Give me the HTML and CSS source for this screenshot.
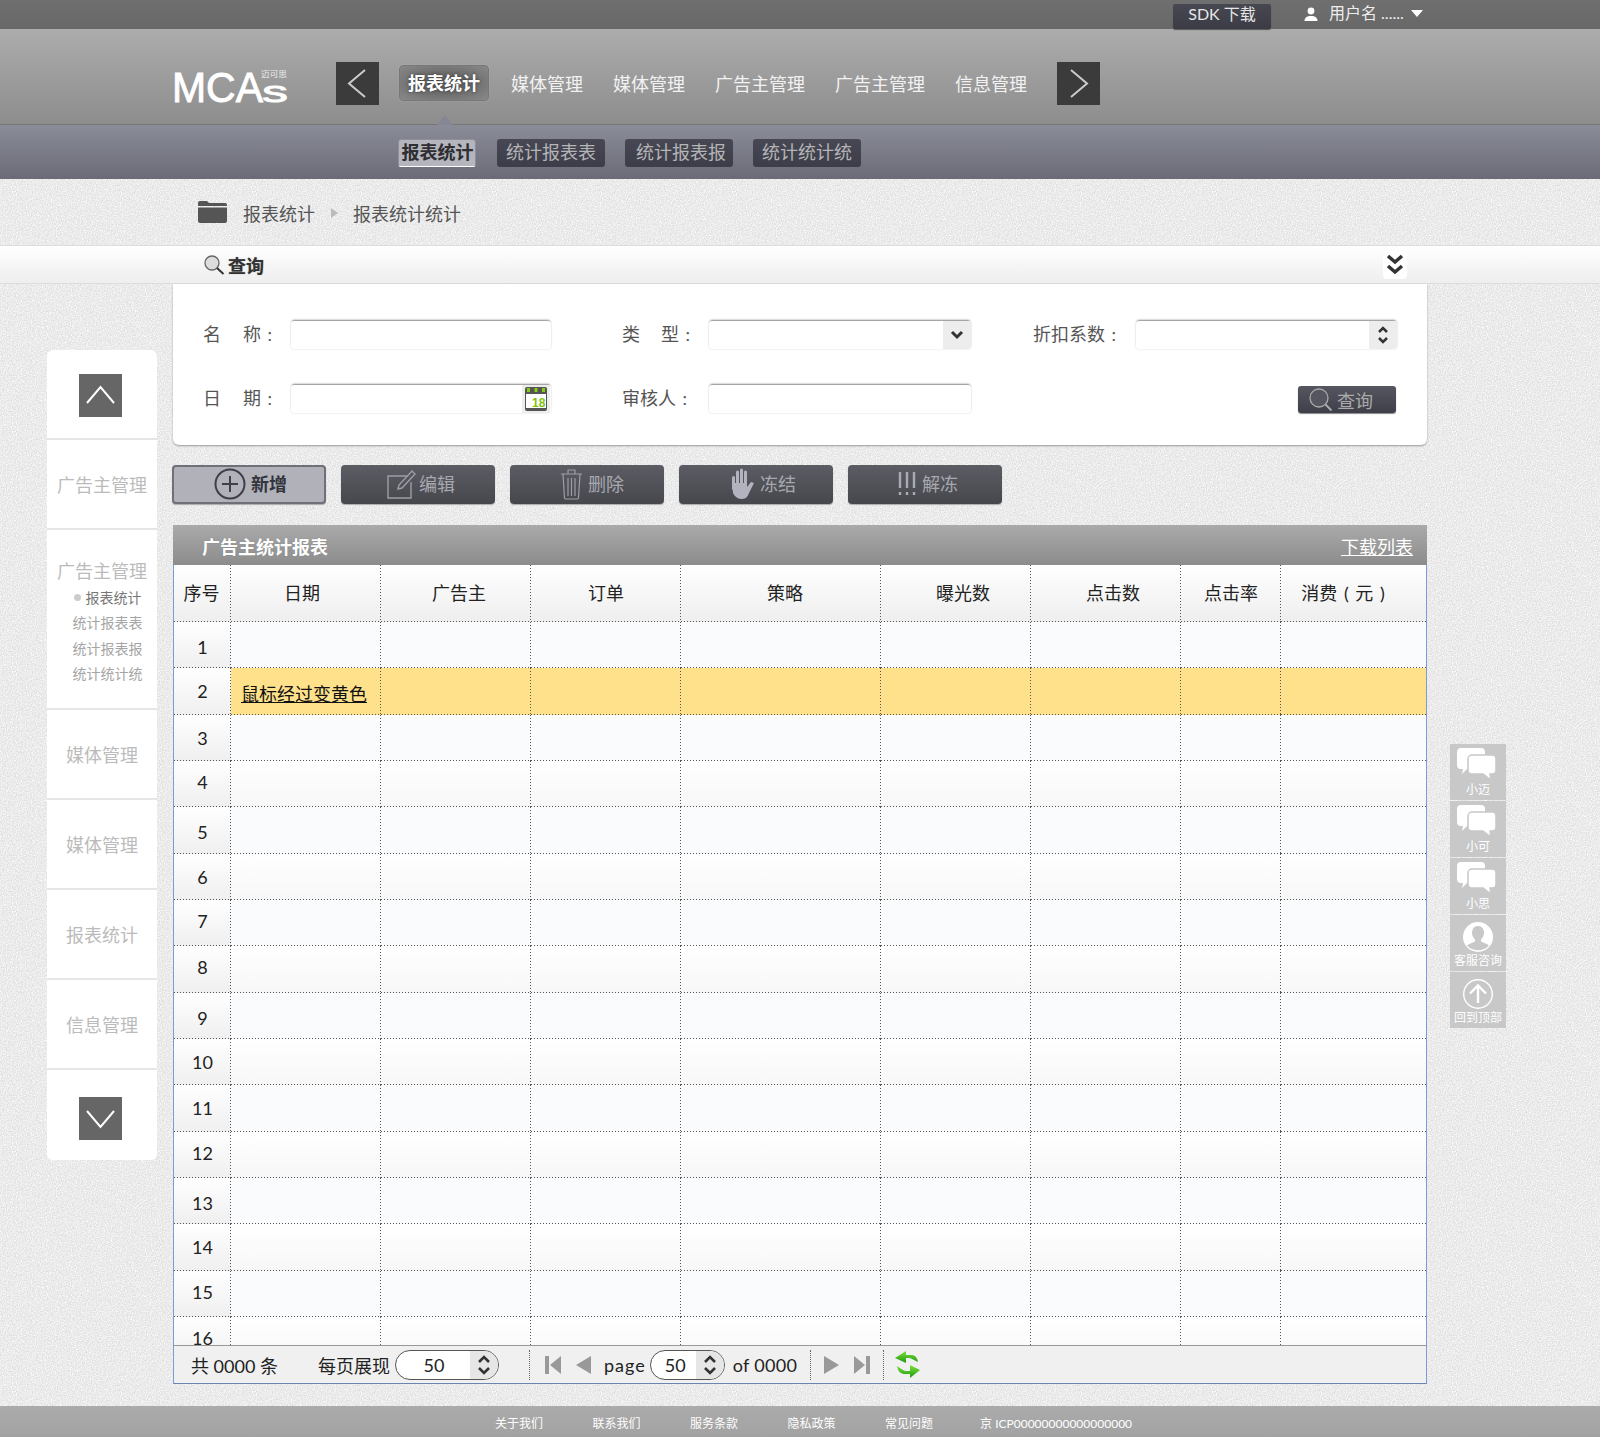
FILE: index.html
```html
<!DOCTYPE html>
<html lang="zh-CN">
<head>
<meta charset="utf-8">
<title>MCAs</title>
<link rel="stylesheet" href="styles.css">
</head>
<body>
<div class="page">
  <div class="topbar">
    <a class="sdk">SDK 下载</a>
    <svg class="user-ic" viewBox="0 0 14 14"><circle cx="7" cy="4" r="3.4"/><path d="M0.5 14c0-3.5 3-4.6 4.5-5h4c1.5.4 4.500 1.500 4.500 5z"/></svg>
    <span class="user">用户名 ......</span>
    <span class="caret"></span>
  </div>

  <header class="header">
    <svg class="logo" viewBox="0 0 116 34" width="116" height="34">
      <text class="logo-main" x="0" y="33" textLength="91" lengthAdjust="spacingAndGlyphs">MCA</text>
      <text class="logo-s" x="90" y="33" textLength="26" lengthAdjust="spacingAndGlyphs">s</text>
      <text class="logo-cn" x="89" y="8" textLength="26" lengthAdjust="spacingAndGlyphs">迈可思</text>
    </svg>
    <a class="arrow-btn prev"><svg viewBox="0 0 43 43"><polyline points="29,8 13,21.500 29,35"/></svg></a>
    <nav class="nav">
      <a class="nav-item active">报表统计</a>
      <a class="nav-item">媒体管理</a>
      <a class="nav-item">媒体管理</a>
      <a class="nav-item">广告主管理</a>
      <a class="nav-item">广告主管理</a>
      <a class="nav-item">信息管理</a>
    </nav>
    <a class="arrow-btn next"><svg viewBox="0 0 43 43"><polyline points="14,8 30,21.500 14,35"/></svg></a>
  </header>

  <div class="subnav">
    <span class="notch"></span>
    <a class="tab on">报表统计</a>
    <a class="tab">统计报表表</a>
    <a class="tab">统计报表报</a>
    <a class="tab">统计统计统</a>
  </div>

  <div class="crumbs">
    <svg class="folder" viewBox="0 0 29 23"><path d="M0 3a2 2 0 0 1 2-2h7l2 2h16a2 2 0 0 1 2 2v1H0z"/><path d="M0 7.500h29V21a2 2 0 0 1-2 2H2a2 2 0 0 1-2-2z"/></svg>
    <span>报表统计</span>
    <span class="crumb-arrow"></span>
    <span>报表统计统计</span>
  </div>

  <div class="querybar">
    <svg class="q-ic" viewBox="0 0 21 20"><circle cx="8" cy="8" r="7" fill="#ddd" stroke="#666" stroke-width="1.300"/><path d="M13 13l6.500 6" stroke="#333" stroke-width="2"/></svg>
    <strong>查询</strong>
    <a class="collapse"><svg viewBox="0 0 24 28"><path d="M5 5l7 6 7-6M5 15l7 6 7-6" fill="none" stroke="#333" stroke-width="3.500"/></svg></a>
  </div>

  <main class="main">
    <aside class="side">
      <div class="side-cell side-first"><a class="side-btn"><svg viewBox="0 0 43 43"><polyline points="8,29 21.500,13 35,29"/></svg></a></div>
      <div class="side-cell">广告主管理</div>
      <div class="side-group">
        <div class="side-title">广告主管理</div>
        <ul class="side-sub">
          <li class="cur"><i></i>报表统计</li>
          <li>统计报表表</li>
          <li>统计报表报</li>
          <li>统计统计统</li>
        </ul>
      </div>
      <div class="side-cell">媒体管理</div>
      <div class="side-cell">媒体管理</div>
      <div class="side-cell">报表统计</div>
      <div class="side-cell">信息管理</div>
      <div class="side-cell side-last"><a class="side-btn"><svg viewBox="0 0 43 43"><polyline points="8,14 21.500,30 35,14"/></svg></a></div>
    </aside>

    <section class="content">
      <form class="form">
        <label class="lbl wide"><span>名</span><span>称 :</span></label>
        <div class="inp"></div>
        <label class="lbl wide wide2 col2"><span>类</span><span>型 :</span></label>
        <div class="inp"><span class="side-box"><svg viewBox="0 0 28 28"><path d="M9 11l5 5 5-5" fill="none" stroke="#333" stroke-width="3"/></svg></span></div>
        <label class="lbl col3">折扣系数 :</label>
        <div class="inp"><span class="side-box"><svg viewBox="0 0 28 28"><path d="M10 11l4-4 4 4M10 17l4 4 4-4" fill="none" stroke="#333" stroke-width="2.500"/></svg></span></div>

        <label class="lbl wide"><span>日</span><span>期 :</span></label>
        <div class="inp"><span class="cal"><svg viewBox="0 0 24 26"><rect x="1" y="1" width="22" height="24" rx="2" fill="#555"/><rect x="3" y="2" width="3" height="4" fill="#8c1"/><rect x="10.500" y="2" width="3" height="4" fill="#8c1"/><rect x="18" y="2" width="3" height="4" fill="#8c1"/><rect x="2" y="8" width="20" height="14" fill="#fff"/><text class="cal-num" x="8" y="21">18</text></svg></span></div>
        <label class="lbl col2b">审核人 :</label>
        <div class="inp"></div>
        <span class="blank"></span>
        <a class="q-btn">
          <svg viewBox="0 0 26 24"><circle cx="11" cy="10" r="9" fill="#55565f" stroke="#aaa" stroke-width="1.300"/><path d="M17.500 16.500l6 6" stroke="#aaa" stroke-width="2"/></svg>
          <span>查询</span>
        </a>
      </form>

      <div class="tools">
        <a class="tool t-add">
          <svg width="32" height="32" viewBox="0 0 32 32"><circle cx="16" cy="16" r="14.500" fill="none" stroke="#3e3f48" stroke-width="2"/><path d="M16 8v16M8 16h16" stroke="#3e3f48" stroke-width="2"/></svg>
          <span>新增</span>
        </a>
        <a class="tool t-edit">
          <svg width="31" height="30" viewBox="0 0 31 30"><path d="M20 7H1v22h23V13" fill="none" stroke="#9c9da5" stroke-width="1.400"/><path d="M11 20l1-4L25 2l3 3-13 14z" fill="none" stroke="#9c9da5" stroke-width="1.400"/></svg>
          <span>编辑</span>
        </a>
        <a class="tool t-del">
          <svg width="23" height="32" viewBox="0 0 23 32"><path d="M1 6h21M8 6V2h7v4M3 6l1.500 24a1.500 1.500 0 0 0 1.500 1h11a1.500 1.500 0 0 0 1.500-1L20 6M8 10v18M11.500 10v18M15 10v18" fill="none" stroke="#9c9da5" stroke-width="1.200"/></svg>
          <span>删除</span>
        </a>
        <a class="tool t-frz">
          <svg width="24" height="31" viewBox="0 0 24 31"><path d="M2.500 9.500v11M6.500 4v13M10.500 2v15M14.500 4v13" stroke="#b3b3c0" stroke-width="3" stroke-linecap="round"/><path d="M1 15h15v4l4-5 3 1-5 10c-1 3-3 6-7 6s-7-2-9-6z" fill="#b3b3c0"/></svg>
          <span>冻结</span>
        </a>
        <a class="tool t-unf">
          <svg width="18" height="24" viewBox="0 0 18 24"><path d="M2 0v16M9 0v16M16 0v16M2 20v3M9 20v3M16 20v3" stroke="#aaaab5" stroke-width="2.400"/></svg>
          <span>解冻</span>
        </a>
      </div>

      <div class="t-head">
        <strong>广告主统计报表</strong>
        <a class="down">下载列表</a>
      </div>
      <div class="t-wrap">
        <table class="grid">
          <colgroup><col class="c1"><col class="c2"><col class="c2"><col class="c2"><col class="c3"><col class="c2"><col class="c2"><col class="c4"><col class="c5"></colgroup>
          <thead>
            <tr><th>序号</th><th>日期</th><th>广告主</th><th>订单</th><th>策略</th><th>曝光数</th><th>点击数</th><th>点击率</th><th>消费 ( 元 )</th></tr>
          </thead>
          <tbody>
            <tr><td>1</td><td></td><td></td><td></td><td></td><td></td><td></td><td></td><td></td></tr>
            <tr class="hover"><td>2</td><td class="lnk"><a>鼠标经过变黄色</a></td><td></td><td></td><td></td><td></td><td></td><td></td><td></td></tr>
            <tr><td>3</td><td></td><td></td><td></td><td></td><td></td><td></td><td></td><td></td></tr>
            <tr><td>4</td><td></td><td></td><td></td><td></td><td></td><td></td><td></td><td></td></tr>
            <tr><td>5</td><td></td><td></td><td></td><td></td><td></td><td></td><td></td><td></td></tr>
            <tr><td>6</td><td></td><td></td><td></td><td></td><td></td><td></td><td></td><td></td></tr>
            <tr><td>7</td><td></td><td></td><td></td><td></td><td></td><td></td><td></td><td></td></tr>
            <tr><td>8</td><td></td><td></td><td></td><td></td><td></td><td></td><td></td><td></td></tr>
            <tr><td>9</td><td></td><td></td><td></td><td></td><td></td><td></td><td></td><td></td></tr>
            <tr><td>10</td><td></td><td></td><td></td><td></td><td></td><td></td><td></td><td></td></tr>
            <tr><td>11</td><td></td><td></td><td></td><td></td><td></td><td></td><td></td><td></td></tr>
            <tr><td>12</td><td></td><td></td><td></td><td></td><td></td><td></td><td></td><td></td></tr>
            <tr><td>13</td><td></td><td></td><td></td><td></td><td></td><td></td><td></td><td></td></tr>
            <tr><td>14</td><td></td><td></td><td></td><td></td><td></td><td></td><td></td><td></td></tr>
            <tr><td>15</td><td></td><td></td><td></td><td></td><td></td><td></td><td></td><td></td></tr>
            <tr class="tail"><td>16</td><td></td><td></td><td></td><td></td><td></td><td></td><td></td><td></td></tr>
          </tbody>
        </table>
      </div>
      <div class="pager">
        <span class="p-total">共 0000 条</span>
        <span class="p-size">每页展现</span>
        <span class="pill p-wide"><b>50</b><i class="spin"><svg viewBox="0 0 28 28"><path d="M9 11l5-5 5 5M9 17l5 5 5-5" fill="none" stroke="#333" stroke-width="2.600"/></svg></i></span>
        <span class="sep s1"></span>
        <svg class="pg-ic i-first" viewBox="0 0 16 18"><rect x="0" y="0" width="4" height="18"/><path d="M16 0v18L5 9z"/></svg>
        <svg class="pg-ic i-prev" viewBox="0 0 15 18"><path d="M15 0v18L0 9z"/></svg>
        <span class="p-page">page</span>
        <span class="pill p-narrow"><b>50</b><i class="spin"><svg viewBox="0 0 28 28"><path d="M9 11l5-5 5 5M9 17l5 5 5-5" fill="none" stroke="#333" stroke-width="2.600"/></svg></i></span>
        <span class="p-of">of 0000</span>
        <span class="sep s2"></span>
        <svg class="pg-ic i-next" viewBox="0 0 15 18"><path d="M0 0v18L15 9z"/></svg>
        <svg class="pg-ic i-last" viewBox="0 0 16 18"><path d="M0 0v18L11 9z"/><rect x="12" y="0" width="4" height="18"/></svg>
        <span class="sep s3"></span>
        <svg class="refresh" viewBox="0 0 25 27"><defs><linearGradient id="rg" x1="0" y1="0" x2="0" y2="1"><stop offset="0" stop-color="#7fe03a"/><stop offset="1" stop-color="#1c9a12"/></linearGradient></defs><path d="M0 7L11 0v4h5c3 0 6 1 7 7l-6-3c-1-.5-2-1-3-1h-3v5z" fill="url(#rg)"/><path d="M25 19l-10 8v-4h-5c-4 0-7-2-8-8l6 4c1 .7 2 1 3 1h4v-6z" fill="url(#rg)"/></svg>
      </div>
    </section>
  </main>

  <footer class="footer">
    <a>关于我们</a><a>联系我们</a><a>服务条款</a><a>隐私政策</a><a>常见问题</a><span class="icp">京 ICP00000000000000000</span>
  </footer>

  <div class="float">
    <a class="f-item"><svg viewBox="0 0 56 34"><path class="b" d="M11 1h20a4 4 0 0 1 4 4v13a4 4 0 0 1-4 4H17l-5 5 1-5h-2a4 4 0 0 1-4-4V5a4 4 0 0 1 4-4z"/><path class="f" d="M22 8h20a4 4 0 0 1 4 4v11a4 4 0 0 1-4 4h-2l1 6-8-6H22a4 4 0 0 1-4-4V12a4 4 0 0 1 4-4z"/></svg><span>小迈</span></a>
    <a class="f-item"><svg viewBox="0 0 56 34"><path class="b" d="M11 1h20a4 4 0 0 1 4 4v13a4 4 0 0 1-4 4H17l-5 5 1-5h-2a4 4 0 0 1-4-4V5a4 4 0 0 1 4-4z"/><path class="f" d="M22 8h20a4 4 0 0 1 4 4v11a4 4 0 0 1-4 4h-2l1 6-8-6H22a4 4 0 0 1-4-4V12a4 4 0 0 1 4-4z"/></svg><span>小可</span></a>
    <a class="f-item"><svg viewBox="0 0 56 34"><path class="b" d="M11 1h20a4 4 0 0 1 4 4v13a4 4 0 0 1-4 4H17l-5 5 1-5h-2a4 4 0 0 1-4-4V5a4 4 0 0 1 4-4z"/><path class="f" d="M22 8h20a4 4 0 0 1 4 4v11a4 4 0 0 1-4 4h-2l1 6-8-6H22a4 4 0 0 1-4-4V12a4 4 0 0 1 4-4z"/></svg><span>小思</span></a>
    <a class="f-item"><svg viewBox="0 0 56 34"><circle cx="28" cy="19" r="15" fill="#fff"/><path d="M28 8c4 0 6 3 6 7 0 3-1.500 5-3 6.500v2c2 1 6 2 8 4a15 15 0 0 1-22 0c2-2 6-3 8-4v-2c-1.500-1.500-3-3.500-3-6.500 0-4 2-7 6-7z" fill="#c8c8c8"/></svg><span>客服咨询</span></a>
    <a class="f-item"><svg viewBox="0 0 56 34"><circle cx="28" cy="19" r="14.300" fill="none" stroke="#fff" stroke-width="1.400"/><path d="M28 28V11M20 18.500l8-8 8 8" fill="none" stroke="#fff" stroke-width="2.400"/></svg><span>回到顶部</span></a>
  </div>
</div>
</body>
</html>
```

FILE: styles.css
```css
* { box-sizing: border-box; }
html, body { margin: 0; padding: 0; }
body {
  font-family: Lato, "Noto Sans CJK SC", sans-serif;
  font-size: 18px;
  color: #555;
  background-color: #e0e0e0;
  background-image: url("data:image/svg+xml,%3Csvg xmlns='http://www.w3.org/2000/svg' width='240' height='240'%3E%3Cfilter id='n'%3E%3CfeTurbulence type='fractalNoise' baseFrequency='.8' numOctaves='2' stitchTiles='stitch'/%3E%3CfeColorMatrix values='0 0 0 0 1 0 0 0 0 1 0 0 0 0 1 0 0 0 1.800 -.55'/%3E%3C/filter%3E%3Crect width='240' height='240' filter='url(%23n)'/%3E%3C/svg%3E");
}
a { text-decoration: none; color: inherit; }
svg { display: block; flex: none; }
.page { position: relative; width: 1600px; height: 1437px; overflow: hidden; }

/* top bar */
.topbar {
  height: 29px;
  background: linear-gradient(#6f6f6f, #686868);
  display: flex;
  align-items: center;
  padding-left: 1173px;
  color: #eee;
  font-size: 16px;
}
.sdk {
  width: 98px; height: 25px; margin-top: 3px;
  padding-bottom: 5px;
  line-height: 18px;
  background: linear-gradient(#474852, #3a3b45);
  border-radius: 2px;
  color: #e6e6e6;
  display: flex; align-items: center; justify-content: center;
  box-shadow: 0 1px 1px #555;
}
.user-ic { width: 14px; height: 14px; margin-left: 33px; margin-bottom: 2px; fill: #fff; }
.user { margin-left: 11px; line-height: 26px; margin-bottom: 3px; }
.caret {
  margin-left: 7px;
  width: 0; height: 0;
  border-left: 6px solid transparent;
  border-right: 6px solid transparent;
  border-top: 7px solid #fff;
  margin-bottom: 3px;
}

/* header */
.header {
  height: 96px;
  background: linear-gradient(#acacac, #8d8d8d);
  border-bottom: 1px solid #777;
  display: flex;
  padding: 33px 0 0 172px;
  align-items: flex-start;
}
.logo { margin-top: 7px; margin-right: 48px; overflow: visible; }
.logo-main { font: 400 42px "Liberation Sans", sans-serif; fill: #fff; stroke: #fff; stroke-width: .9; }
.logo-s { font: 400 30px "Liberation Sans", sans-serif; fill: #fff; stroke: #fff; stroke-width: .8; }
.logo-cn { font: 400 8px "Noto Sans CJK SC", sans-serif; fill: #eee; }
.arrow-btn { width: 43px; height: 43px; background: #3b3b3b; }
.arrow-btn svg { width: 43px; height: 43px; }
.arrow-btn polyline { fill: none; stroke: #ccc; stroke-width: 2; }
.prev { margin-right: 20px; }
.next { margin-left: 30px; }
.nav { display: flex; height: 43px; align-items: center; color: #f2f2f2; }
.nav-item { display: block; line-height: 36px; margin-top: 0; }
.nav-item + .nav-item { margin-left: 30px; }
.nav-item.active {
  width: 90px; height: 36px;
  margin-right: -8px; margin-top: -1px;
  text-align: center;
  font-weight: 700;
  color: #fff;
  border: 1px solid #777;
  border-radius: 4px;
  line-height: 34px;
  background: radial-gradient(ellipse at center, #666 30%, #8a8a8a 100%);
  text-shadow: 0 0 3px #333;
  box-shadow: 0 0 1px #ccc;
}

/* sub nav */
.subnav {
  position: relative;
  height: 54px;
  background: linear-gradient(#8a8c97, #6a6b76);
  display: flex;
  padding: 14px 0 0 398px;
  align-items: flex-start;
}
.notch {
  position: absolute; left: 437px; top: -10px;
  width: 0; height: 0;
  border-left: 8px solid transparent;
  border-right: 8px solid transparent;
  border-bottom: 10px solid #858794;
}
.tab {
  width: 108px; height: 28px; margin-right: 20px;
  border-radius: 3px;
  background: linear-gradient(#474853, #3c3d48);
  color: #b5b5b8;
  text-align: center;
  line-height: 26px;
}
.tab:nth-of-type(3) { padding-left: 4px; }
.tab.on {
  width: 78px; margin-right: 21px;
  padding-left: 1px;
  background: #b4b5bd;
  color: #2e2e33;
  font-weight: 700;
  border: 1px solid #8e8f98;
  border-bottom: 1px solid #fff;
  line-height: 24px;
}

/* breadcrumbs */
.crumbs {
  height: 66px;
  display: flex;
  align-items: center;
  padding: 2px 0 0 198px;
  color: #555;
}
.folder { width: 29px; height: 23px; fill: #555; margin-right: 16px; margin-top: -4px; }
.crumb-arrow {
  width: 0; height: 0; margin: 0 15px 0 16px;
  border-top: 5px solid transparent;
  border-bottom: 5px solid transparent;
  border-left: 7px solid #bbb;
}

/* query bar */
.querybar {
  height: 39px;
  border-top: 1px solid #ddd;
  border-bottom: 1px solid #ddd;
  background: linear-gradient(#fff, #eee);
  display: flex;
  align-items: center;
  padding-left: 204px;
  color: #333;
}
.q-ic { width: 21px; height: 20px; margin-right: 3px; }
.querybar strong { text-shadow: 0 0 1px #888; }
.collapse {
  margin-left: 1119px;
  width: 24px; height: 28px;
  background: #fff;
  border-radius: 4px;
}

/* main */
.main { display: flex; padding-left: 47px; height: 1122px; align-items: flex-start; }
.side {
  margin-top: 66px;
  width: 110px;
  background: #fff;
  border-radius: 6px;
  color: #bbb;
  text-align: center;
  overflow: hidden;
}
.side-cell {
  height: 90px;
  border-bottom: 2px solid #e6e6e6;
  display: flex; align-items: center; justify-content: center;
}
.side-last { border-bottom: 0; }
.side-btn { display: block; width: 43px; height: 43px; background: #666; margin-right: 3px; }
.side-first .side-btn { margin-top: 3px; }
.side-last .side-btn { margin-top: 6px; }
.side-btn polyline { fill: none; stroke: #fff; stroke-width: 2; }
.side-group { height: 180px; border-bottom: 2px solid #e6e6e6; padding-top: 29px; }
.side-title { line-height: 24px; }
.side-sub { list-style: none; margin: 2px 0 0; padding: 0 0 0 11px; font-size: 14px; color: #a5a5a5; line-height: 25.300px; }
.side-sub .cur { color: #777; }
.side-sub .cur i { display: inline-block; width: 7px; height: 7px; border-radius: 50%; background: #ccc; margin-right: 5px; vertical-align: 2px; }

.content { margin-left: 16px; width: 1254px; }

/* form */
.form {
  height: 161px;
  background: #fff;
  border-radius: 0 0 6px 6px;
  box-shadow: 0 1px 2px #999;
  padding: 37px 0 0 30px;
  display: grid;
  grid-template-columns: 88px 260px 158px 262px 165px 261px;
  grid-template-rows: 28px 28px;
  row-gap: 36px;
  align-items: center;
}
.lbl { color: #555; line-height: 26px; padding-bottom: 2px; white-space: nowrap; word-spacing: 2px; }
.wide { display: flex; gap: 22px; }
.wide2 { gap: 21px; }
.col2 { padding-left: 71px; }
.col2b { padding-left: 71px; }
.col3 { padding-left: 62px; }
.inp {
  position: relative;
  height: 28px;
  background: #fff;
  border-radius: 3px;
  box-shadow: 0 -2px 2px -1px #8a8a8a, 0 0 2px #d4d4d4;
}
.side-box { position: absolute; right: 0; top: 0; width: 28px; height: 28px; background: #ededed; border-radius: 0 3px 3px 0; }
.side-box svg { width: 28px; height: 28px; }
.cal { position: absolute; right: 1px; top: 0; width: 28px; height: 28px; background: #ededed; padding: 1px 2px; }
.cal svg { width: 24px; height: 26px; }
.cal-num { font: 700 12px "Liberation Sans", sans-serif; fill: #7dc40e; }
.blank { display: block; }
.q-btn {
  justify-self: end;
  width: 98px; height: 27px; margin: 1px 1px 0 0;
  background: linear-gradient(#55565f, #3e3f49);
  border-radius: 3px;
  color: #aaa;
  display: flex; align-items: center;
  padding-left: 10px;
  gap: 3px;
  box-shadow: 0 1px 1px #888;
}
.q-btn svg { width: 26px; height: 24px; }

/* toolbar */
.tools { display: flex; gap: 15px; margin-top: 20px; margin-left: -1px; }
.tool {
  width: 154px; height: 39px;
  border-radius: 4px;
  background: linear-gradient(#5c5d64, #46474d);
  color: #a8a8b0;
  display: flex; align-items: center;
  gap: 2px;
  box-shadow: 0 1px 1px #aaa;
}
.tool span { margin-bottom: 4px; }
.tool svg { margin-bottom: 2px; }
.t-add {
  background: #b0b1b9;
  border: 2px solid #6f7078;
  padding-left: 40px;
  gap: 5px;
  color: #33343c;
  font-weight: 700;
}
.t-edit { padding-left: 46px; gap: 1px; }
.t-del { padding-left: 50px; gap: 5px; }
.t-frz { padding-left: 52px; gap: 5px; }
.t-unf { padding-left: 50px; gap: 6px; }

/* table */
.t-head {
  margin-top: 21px;
  height: 40px;
  background: linear-gradient(#aaa, #8c8c8c);
  display: flex; align-items: center; justify-content: space-between;
  padding: 2px 14px 0 29px;
  color: #fff;
}
.t-head strong { text-shadow: 0 0 1px #777; }
.down { text-decoration: underline; }
.t-wrap {
  height: 780px;
  overflow: hidden;
  border-left: 1px solid #7b9cd6;
  border-right: 1px solid #7b9cd6;
  background: #fff;
}
.grid {
  --dot-h: repeating-linear-gradient(to right, #555 0 1px, transparent 1px 3px);
  --dot-v: repeating-linear-gradient(to bottom, #555 0 1px, transparent 1px 3px);
  width: 1252px;
  table-layout: fixed;
  border-collapse: separate;
  border-spacing: 0;
  color: #222;
}
.c1 { width: 57px; }
.c2 { width: 150px; }
.c3 { width: 200px; }
.c4 { width: 100px; }
.c5 { width: 145px; }
.grid th, .grid td {
  --v: var(--dot-v);
  padding: 0;
  text-align: center;
  background:
    var(--dot-h) left bottom / 100% 1px no-repeat,
    var(--v) right top / 1px 100% no-repeat,
    var(--cell);
}
.grid th:last-child, .grid td:last-child { --v: none; }
.grid th { --cell: linear-gradient(#fff, #eee); height: 57px; font-weight: 400; padding-bottom: 4px; }
.grid th:first-child { padding-right: 2px; }
.grid th:nth-child(2) { padding-right: 8px; }
.grid th:nth-child(3) { padding-left: 6px; }
.grid th:nth-child(5) { padding-left: 8px; }
.grid th:nth-child(6), .grid th:nth-child(7) { padding-left: 14px; }
.grid th:nth-child(9) { padding-right: 21px; word-spacing: 2px; }
.grid td { height: 46.330px; }
.grid tbody tr:nth-child(odd) td { --cell: linear-gradient(#fafbfd, #fafbfd); }
.grid tbody tr:nth-child(even) td { --cell: linear-gradient(#fff, #f7f7f8); }
.grid tbody tr td:first-child { --cell: linear-gradient(#fff, #efefef); }
.grid tbody tr:nth-child(4n+1) td:first-child { padding-top: 4px; }
.grid tbody tr:nth-child(4) td:first-child,
.grid tbody tr:nth-child(7) td:first-child,
.grid tbody tr:nth-child(8) td:first-child,
.grid tbody tr:nth-child(12) td:first-child,
.grid tbody tr:nth-child(15) td:first-child { padding-bottom: 4px; }
.grid tbody tr.hover td { --cell: linear-gradient(#ffe18c, #ffe18c); }
.grid tbody tr.hover td:first-child { --cell: linear-gradient(#fff, #efefef); }
.grid tbody tr.tail td { padding-bottom: 5px; }
.grid td.lnk { text-align: left; padding: 4px 0 0 10px; }
.lnk a { text-decoration: underline; color: #111; }

/* pager */
.pager {
  height: 39px;
  background: #f0f0f0;
  border: 1px solid #7b9cd6;
  border-top: 1px solid #999;
  border-bottom-color: #6a86b0;
  display: flex; align-items: center;
  padding-left: 17px;
  color: #222;
}
.p-total { width: 127px; }
.pill {
  display: flex; align-items: center;
  height: 30px;
  border: 1px solid #555;
  border-radius: 15px;
  overflow: hidden;
  background: #fff;
}
.pill b { flex: 1; font-weight: 400; text-align: center; }
.spin { width: 28px; height: 28px; background: #e6e6e6; }
.spin svg { width: 28px; height: 28px; }
.p-wide { width: 104px; margin-left: 5px; }
.p-wide b { padding-left: 2px; }
.p-narrow { width: 75px; margin-left: 4px; }
.p-narrow b { padding-left: 4px; }
.sep { width: 0; height: 30px; border-left: 1px dotted #666; }
.s1 { margin-left: 30px; }
.pg-ic { fill: #999; height: 18px; }
.i-first { width: 16px; margin-left: 15px; }
.i-prev { width: 15px; margin-left: 15px; }
.p-page { margin-left: 13px; letter-spacing: 1px; }
.p-of { margin-left: 8px; letter-spacing: .3px; }
.s2 { margin-left: 13px; }
.i-next { width: 15px; margin-left: 13px; }
.i-last { width: 16px; margin-left: 15px; }
.s3 { margin-left: 13px; }
.refresh { width: 25px; height: 27px; margin-left: 11px; }

/* footer */
.footer {
  position: absolute; left: 0; right: 0; bottom: 0;
  height: 31px;
  background: linear-gradient(#ababab, #a2a2a2);
  color: #fff;
  font-size: 12px;
  display: flex; align-items: center;
  padding: 2px 0 0 495px;
  gap: 49.500px;
}
.icp { margin-left: -2.500px; }

/* floating widget */
.float { position: absolute; left: 1450px; top: 744px; width: 56px; display: flex; flex-direction: column; gap: 1px; }
.f-item {
  height: 56px;
  background: #c8c8c8;
  color: #fff;
  font-size: 12px;
  text-align: center;
  display: block;
  padding-top: 3px;
}
.f-item svg { width: 56px; height: 34px; }
.f-item span { display: block; line-height: 15px; margin-top: 1px; white-space: nowrap; }
.f-item .b, .f-item .f { fill: #fff; }
.f-item .f { stroke: #c8c8c8; stroke-width: 1.500; }
```
